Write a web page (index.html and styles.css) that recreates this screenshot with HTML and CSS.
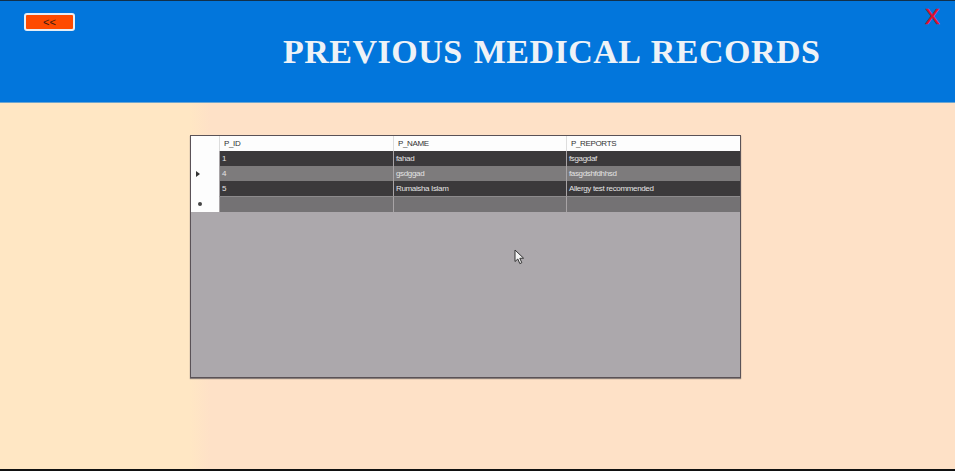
FILE: index.html
```html
<!DOCTYPE html>
<html lang="en">
  <head>
    <meta charset="UTF-8" />
    <meta name="viewport" content="width=device-width, initial-scale=1.0" />
    <title>Previous Medical Records</title>
    <link rel="stylesheet" href="styles.css">
  </head>
  <body>
    <header class="banner">
      <button class="back-button" type="button">&lt;&lt;</button>
      <h1 class="banner-title">PREVIOUS MEDICAL RECORDS</h1>
      <span class="close-button">X</span>
    </header>

    <main class="content">
      <div class="records-grid">
        <div class="grid-row grid-head">
          <div class="row-marker"></div>
          <div class="cell">P_ID</div>
          <div class="cell">P_NAME</div>
          <div class="cell">P_REPORTS</div>
        </div>
        <div class="grid-row row-dark">
          <div class="row-marker"></div>
          <div class="cell">1</div>
          <div class="cell">fahad</div>
          <div class="cell">fsgagdaf</div>
        </div>
        <div class="grid-row row-light">
          <div class="row-marker"><span class="marker-arrow"></span></div>
          <div class="cell">4</div>
          <div class="cell">gsdggad</div>
          <div class="cell">fasgdshfdhhsd</div>
        </div>
        <div class="grid-row row-dark">
          <div class="row-marker"></div>
          <div class="cell">5</div>
          <div class="cell">Rumaisha Islam</div>
          <div class="cell">Allergy test recommended</div>
        </div>
        <div class="grid-row row-new">
          <div class="row-marker"><span class="marker-dot"></span></div>
          <div class="cell"></div>
          <div class="cell"></div>
          <div class="cell"></div>
        </div>
      </div>
    </main>

    <svg class="mouse-cursor" width="11" height="16" viewBox="0 0 11 16">
      <path d="M1 1 L1 12.5 L3.8 10 L5.8 14.6 L7.8 13.7 L5.8 9.3 L9.6 9.2 Z" fill="#f4f4f4" stroke="#333" stroke-width="1"/>
    </svg>
  </body>
</html>
```

FILE: styles.css
```css
html,
body {
  height: 100%;
}
body {
  margin: 0;
  position: relative;
  display: flex;
  flex-direction: column;
  overflow: hidden;
  box-sizing: border-box;
  background-color: #fee3c2;
  border-bottom: 2px solid #111;
  font-family: "Liberation Sans", Arial, sans-serif;
}
.banner {
  height: 103px;
  box-sizing: border-box;
  flex: none;
  display: flex;
  align-items: flex-start;
  background-color: #0276dc;
  border-top: 1px solid #12304a;
  border-bottom: 1px solid #6ea6d0;
}
.back-button {
  width: 51px;
  height: 18px;
  margin: 12px 0 0 24px;
  padding: 0;
  flex: none;
  background-color: #fe4a00;
  border: 2px solid #e8eef4;
  border-radius: 3px;
  color: #3a1a10;
  font-family: "Liberation Sans", Arial, sans-serif;
  font-size: 11px;
  line-height: 12px;
}
.banner-title {
  width: 538px;
  margin: 29px 0 0 208px;
  flex: none;
  color: #eef2f7;
  font-family: "Liberation Serif", "Times New Roman", serif;
  font-size: 34px;
  font-weight: bold;
  letter-spacing: 0.5px;
  word-spacing: 2px;
  line-height: 44px;
  white-space: nowrap;
}
.close-button {
  margin: 4px 0 0 104px;
  color: #e0102c;
  font-size: 22px;
  line-height: 24px;
  -webkit-text-stroke: 0.5px #e0102c;
}
.content {
  flex: 1;
  padding: 32px 0 0 190px;
  background: linear-gradient(90deg, #ffe7c4 190px, #fee1c7 210px);
}
.records-grid {
  width: 549px;
  height: 241px;
  background-color: #aca8ac;
  border: 1px solid #5a5257;
  box-shadow: 0 1px 1px #8a7f7a;
}
.grid-row {
  display: grid;
  grid-template-columns: 28px 174px 173px 174px;
  height: 15px;
  font-size: 8px;
  letter-spacing: -0.35px;
  line-height: 15px;
  color: #e4e4e4;
}
.row-marker {
  display: flex;
  align-items: center;
  padding-left: 5px;
  background-color: #fdfdfd;
}
.cell {
  padding-left: 2px;
  border-left: 1px solid #a8a4a6;
  white-space: nowrap;
}
.grid-head {
  color: #333;
  background-color: #fdfdfd;
}
.grid-head .cell {
  padding-left: 4px;
  border-left: 1px solid #dddddd;
}
.row-dark {
  background-color: #3b393b;
}
.row-light {
  background-color: #7d7b7c;
}
.row-new {
  height: 16px;
  background-color: #747274;
}
.row-new .cell {
  border-top: 1px solid #8c8a8c;
}
.marker-arrow {
  width: 0;
  height: 0;
  border-top: 3px solid transparent;
  border-bottom: 3px solid transparent;
  border-left: 4px solid #333;
}
.marker-dot {
  width: 4px;
  height: 4px;
  margin-left: 2px;
  border-radius: 50%;
  background-color: #444;
}
.mouse-cursor {
  position: absolute;
  left: 514px;
  top: 249px;
}
```
